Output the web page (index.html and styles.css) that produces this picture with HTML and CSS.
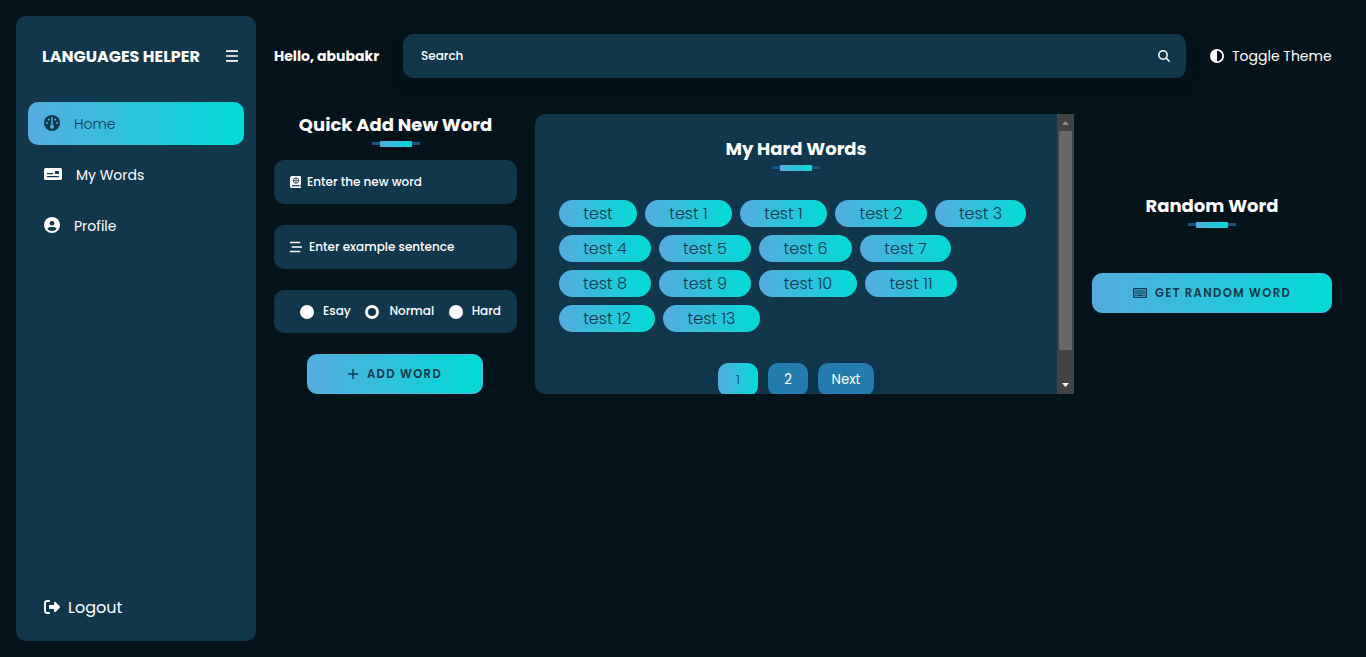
FILE: index.html
```html
<!DOCTYPE html>
<html lang="en">
<head>
<meta charset="utf-8">
<title>Languages Helper</title>
<link rel="stylesheet" href="styles.css">
</head>
<body>
<div class="app">
  <aside class="sidebar">
    <div class="brand">
      <h1 class="brand-name">LANGUAGES HELPER</h1>
      <svg class="menu-icon" viewBox="0 0 12 12"><path d="M0 1.200h12M0 6h12M0 10.800h12" stroke="currentColor" stroke-width="1.700"/></svg>
    </div>
    <nav class="nav">
      <a class="nav-item active">
        <svg class="icon-16" viewBox="0 0 16 16"><circle cx="8" cy="8" r="8" fill="#11374d"/><path d="M8 2.600v8" stroke="#4ab3dc" stroke-width="1.500" stroke-linecap="round"/><circle cx="8" cy="11.700" r="2" fill="#4ab3dc"/><g fill="#4ab3dc"><circle cx="4.700" cy="4.600" r="1"/><circle cx="11.300" cy="4.600" r="1"/><circle cx="3" cy="8" r="1"/><circle cx="13" cy="8" r="1"/></g></svg>
        <span>Home</span>
      </a>
      <a class="nav-item">
        <svg class="icon-card" viewBox="0 0 18 12"><rect width="18" height="12" rx="1.600" fill="#fff"/><path d="M3 5.600h6M3 8.600h12" stroke="#11374d" stroke-width="1.100"/><rect x="11" y="3" width="4" height="3" rx=".6" fill="#11374d"/></svg>
        <span>My Words</span>
      </a>
      <a class="nav-item">
        <svg class="icon-16" viewBox="0 0 16 16"><circle cx="8" cy="8" r="8" fill="#fff"/><circle cx="8" cy="6.200" r="2.300" fill="#11374d"/><path d="M3.400 12.200C4 10.500 5.300 10 6.500 10h3c1.200 0 2.500.5 3.100 2.200A6.500 6.500 0 0 1 8 14a6.500 6.500 0 0 1-4.600-1.800z" fill="#11374d"/></svg>
        <span>Profile</span>
      </a>
    </nav>
    <a class="logout">
      <svg class="icon-16" viewBox="0 0 512 512"><path fill="currentColor" d="M377.900 105.900L500.700 228.700c7.200 7.200 11.300 17.100 11.300 27.300s-4.100 20.100-11.300 27.300L377.900 406.100c-6.400 6.400-15 9.900-24 9.900c-18.700 0-33.900-15.200-33.900-33.900l0-62.100-128 0c-17.700 0-32-14.300-32-32l0-64c0-17.700 14.300-32 32-32l128 0 0-62.100c0-18.700 15.200-33.900 33.900-33.900c9 0 17.600 3.600 24 9.900zM160 96L96 96c-17.700 0-32 14.300-32 32l0 256c0 17.700 14.300 32 32 32l64 0c17.700 0 32 14.300 32 32s-14.300 32-32 32l-64 0c-53 0-96-43-96-96L0 128C0 75 43 32 96 32l64 0c17.700 0 32 14.300 32 32s-14.300 32-32 32z"/></svg>
      <span>Logout</span>
    </a>
  </aside>

  <main class="main">
    <header class="topbar">
      <div class="hello">Hello, abubakr</div>
      <div class="search">
        <span>Search</span>
        <svg class="icon-12" viewBox="0 0 12 12"><circle cx="5" cy="5" r="4.200" fill="none" stroke="currentColor" stroke-width="1.500"/><path d="M8 8l3.300 3.300" stroke="currentColor" stroke-width="1.600" stroke-linecap="round"/></svg>
      </div>
      <div class="toggle">
        <svg class="icon-14" viewBox="0 0 512 512"><path fill="currentColor" d="M448 256c0-106-86-192-192-192l0 384c106 0 192-86 192-192zM0 256a256 256 0 1 1 512 0A256 256 0 1 1 0 256z"/></svg>
        <span>Toggle Theme</span>
      </div>
    </header>

    <div class="content">
      <section class="quick">
        <h2 class="title"><span>Quick Add New Word</span><i class="rule"></i></h2>
        <div class="field">
          <svg class="icon-book" viewBox="0 0 11 12"><path d="M2 0h8.200a.8.8 0 0 1 .8.800V8.500l-.6.500v1.600h.6V12H2a2 2 0 0 1-2-2V2a2 2 0 0 1 2-2z" fill="#fff"/><path d="M2 9.700h7.500" stroke="#11374d" stroke-width="1.200"/><circle cx="6" cy="4.500" r="2.700" fill="none" stroke="#11374d" stroke-width=".9"/><path d="M3.300 4.500h5.400M6 1.800v5.400" stroke="#11374d" stroke-width=".7"/></svg>
          <span>Enter the new word</span>
        </div>
        <div class="field wide-gap">
          <svg class="icon-12" viewBox="0 0 12 12"><path d="M0 1.500h10.300M1.700 6H12M0 10.500h10.300" stroke="currentColor" stroke-width="1.400"/></svg>
          <span>Enter example sentence</span>
        </div>
        <div class="levels">
          <span class="level"><i class="dot"></i><span>Esay</span></span>
          <span class="level mid"><i class="dot checked"></i><span>Normal</span></span>
          <span class="level"><i class="dot"></i><span>Hard</span></span>
        </div>
        <button class="btn btn-add">
          <svg class="icon-plus" viewBox="0 0 10 10"><path d="M5 0v10M0 5h10" stroke="currentColor" stroke-width="1.400"/></svg>
          <span>ADD WORD</span>
        </button>
      </section>

      <section class="hard">
        <div class="hard-body">
          <h2 class="title"><span>My Hard Words</span><i class="rule"></i></h2>
          <div class="pills">
            <span class="pill w78">test</span><span class="pill w87">test 1</span><span class="pill w87">test 1</span><span class="pill w92">test 2</span><span class="pill w91">test 3</span>
            <span class="pill w92">test 4</span><span class="pill w92">test 5</span><span class="pill w93">test 6</span><span class="pill w91 last">test 7</span>
            <span class="pill w92">test 8</span><span class="pill w92">test 9</span><span class="pill w98">test 10</span><span class="pill w92 last">test 11</span>
            <span class="pill w96">test 12</span><span class="pill w97">test 13</span>
          </div>
          <div class="pages">
            <span class="page current">1</span><span class="page">2</span><span class="page next">Next</span>
          </div>
        </div>
        <div class="scrollbar">
          <svg class="arrow dim" viewBox="0 0 17 17"><path d="M5 11h7L8.500 7z" fill="currentColor"/></svg>
          <div class="thumb"></div>
          <svg class="arrow" viewBox="0 0 17 17"><path d="M5 6h7L8.500 10z" fill="currentColor"/></svg>
        </div>
      </section>

      <section class="random">
        <h2 class="title"><span>Random Word</span><i class="rule"></i></h2>
        <button class="btn btn-random">
          <svg class="icon-keys" viewBox="0 0 14 10"><rect x=".6" y=".6" width="12.800" height="8.800" rx="1" fill="none" stroke="currentColor" stroke-width="1.400"/><path d="M2.300 3h9.400M2.300 5h9.400" stroke="currentColor" stroke-width="1.400" stroke-dasharray="1.400 .6"/><path d="M2.300 7.200h1.400M4.500 7.200h5M10.300 7.200h1.400" stroke="currentColor" stroke-width="1.400"/></svg>
          <span>GET RANDOM WORD</span>
        </button>
      </section>
    </div>
  </main>
</div>
</body>
</html>
```
FILE: styles.css
```css
* { box-sizing: border-box; }
body {
  margin: 0;
  height: 657px;
  overflow: hidden;
  background: #04131a;
  color: #fff;
  font-family: Poppins, Inter, "Open Sans", sans-serif;
}
h1, h2 { margin: 0; }
svg { display: block; flex: none; }
span { white-space: nowrap; }
.app { display: flex; gap: 18px; height: 657px; padding: 16px 34px 16px 16px; }

.sidebar {
  display: flex;
  flex-direction: column;
  flex: none;
  width: 240px;
  height: 625px;
  padding: 0 12px;
  border-radius: 10px;
  background: #11374d;
}
.brand { display: flex; align-items: center; justify-content: space-between; height: 80px; padding: 0 6px 0 14px; }
.brand-name { font-size: 16px; font-weight: 700; white-space: nowrap; }
.menu-icon { width: 12px; height: 12px; }
.nav { display: flex; flex-direction: column; gap: 8px; padding-top: 6px; }
.nav-item { display: flex; align-items: center; gap: 14px; height: 43px; padding-left: 16px; border-radius: 10px; font-size: 14px; }
.nav-item svg { position: relative; top: -1px; }
.nav-item span { padding-top: 2px; }
.nav-item.active { background: linear-gradient(90deg, #56abde, #00dbd6); color: #11374d; font-weight: 300; }
.icon-16 { width: 16px; height: 16px; }
.icon-card { width: 18px; height: 12px; }
.icon-12 { width: 12px; height: 12px; }
.icon-14 { width: 14px; height: 14px; }
.icon-book { width: 11px; height: 12px; }
.icon-plus { width: 10px; height: 10px; }
.icon-keys { width: 14px; height: 10px; }
.logout { display: flex; align-items: center; gap: 8px; height: 40px; margin: auto 0 14px; padding-left: 16px; font-size: 16px; }

.main { flex: 1; min-width: 0; padding-top: 18px; }
.topbar { display: flex; align-items: center; height: 44px; }
.hello { flex: none; width: 129px; font-size: 14px; font-weight: 700; white-space: nowrap; }
.search {
  display: flex;
  flex: none;
  align-items: center;
  justify-content: space-between;
  width: 783px;
  height: 44px;
  padding: 0 16px 0 18px;
  border-radius: 10px;
  background: #11374d;
  box-shadow: 0 8px 16px rgba(0, 0, 0, .12);
  font-size: 12px;
  font-weight: 500;
}
.toggle { display: flex; align-items: center; gap: 8px; margin-left: 24px; font-size: 14px; }

.content { display: grid; grid-template-columns: 243px 539px 240px; gap: 18px; height: 280px; margin-top: 36px; }
.title { display: flex; flex-direction: column; align-items: center; height: 33px; font-size: 18px; font-weight: 700; line-height: 22px; }
.rule {
  display: flex;
  align-items: center;
  justify-content: center;
  width: 48px;
  height: 7px;
  margin-top: 4px;
  background: linear-gradient(#1a5580, #1a5580) center / 48px 3px no-repeat;
}
.rule::before { content: ""; width: 32px; height: 6px; border-radius: 1px; background: linear-gradient(90deg, #56abde, #00dbd6); }

.quick { display: flex; flex-direction: column; align-items: center; }
.quick .title { height: 46px; }
.field {
  display: flex;
  align-items: center;
  gap: 6px;
  width: 243px;
  height: 44px;
  margin-bottom: 21px;
  padding-left: 16px;
  border-radius: 10px;
  background: #11374d;
  font-size: 12px;
  font-weight: 500;
}
.wide-gap { gap: 7px; }
.levels {
  display: flex;
  align-items: center;
  justify-content: space-between;
  width: 243px;
  height: 43px;
  padding: 0 16px 0 26px;
  border-radius: 10px;
  background: #11374d;
  font-size: 12px;
  font-weight: 500;
}
.level { display: flex; align-items: center; gap: 9px; }
.level.mid { gap: 10px; }
.level span { padding-bottom: 2px; }
.dot { width: 14px; height: 14px; border-radius: 50%; background: #fff; }
.dot.checked { border: 3px solid #fff; background: #11374d; }
.btn {
  display: flex;
  align-items: center;
  justify-content: center;
  height: 40px;
  padding: 0;
  border: 1px solid #4fb3de;
  border-radius: 10px;
  background: linear-gradient(90deg, #56abde, #00dbd6);
  color: #11374d;
  font: 600 11.500px Poppins, Inter, "Open Sans", sans-serif;
  letter-spacing: 1.400px;
}
.btn-add { gap: 9px; width: 176px; margin: 21px 1px 0 0; }
.btn-random { gap: 8px; width: 240px; }

.hard { display: flex; height: 280px; overflow: hidden; border-radius: 10px 0 0 10px; background: #11374d; }
.hard-body { width: 522px; padding: 24px 24px 0; }
.hard .title { height: 62px; }
.pills { display: flex; flex-wrap: wrap; gap: 8px; }
.pill {
  height: 27px;
  border-radius: 14px;
  background: linear-gradient(90deg, #56abde, #00dbd6);
  color: #11374d;
  font-size: 16px;
  font-weight: 300;
  line-height: 27px;
  text-align: center;
}
.w78 { width: 78px; }
.w87 { width: 87px; }
.w91 { width: 91px; }
.w92 { width: 92px; }
.w93 { width: 93px; }
.w96 { width: 96px; }
.w97 { width: 97px; }
.w98 { width: 98px; }
.last { margin-right: 60px; }
.pages { display: flex; justify-content: center; gap: 10px; margin-top: 31px; }
.page {
  width: 40px;
  height: 33px;
  padding-top: 6px;
  border-radius: 10px;
  background: #247bae;
  box-shadow: 0 5px 12px rgba(0, 0, 0, .15);
  font-size: 13.300px;
  font-weight: 400;
  line-height: 21px;
  text-align: center;
}
.page.current { background: linear-gradient(90deg, #56abde, #00dbd6); color: #11374d; font-weight: 300; }
.page.next { width: 56px; }
.scrollbar { display: flex; flex-direction: column; align-items: center; width: 17px; background: #424242; }
.arrow { width: 17px; height: 17px; }
.arrow.dim { color: #8b8b8b; }
.thumb { width: 13px; height: 219px; margin-bottom: 27px; background: #686868; }

.random { display: flex; flex-direction: column; align-items: center; padding-top: 81px; }
.random .title { height: 78px; }
```
